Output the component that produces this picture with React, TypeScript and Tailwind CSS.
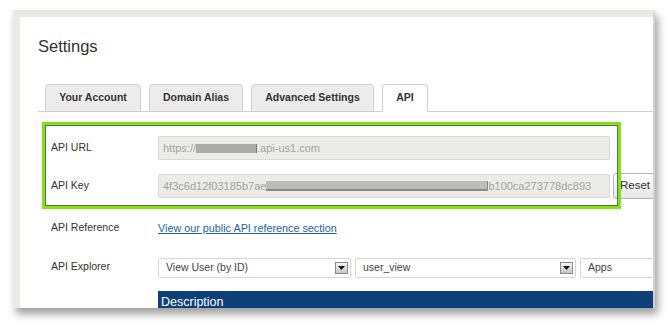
import React from "react";

const tabs = ["Your Account", "Domain Alias", "Advanced Settings", "API"];
const tabWidths = ["w-[96px]", "w-[94px]", "w-[123px]", "w-[46px]"];

function Arrow() {
  return (
    <span className="flex h-[12px] w-[13px] shrink-0 items-center justify-center border border-[#8a8a8a] bg-gradient-to-b from-[#f6f6f6] to-[#c4c4c4]">
      <svg width="7" height="4" viewBox="0 0 7 4">
        <path d="M0 0h7L3.5 4z" fill="#111" />
      </svg>
    </span>
  );
}

function Select({ value, width, arrow = true }: { value: string; width: string; arrow?: boolean }) {
  return (
    <div className={`flex h-[20px] shrink-0 items-center justify-between rounded-[2px] border border-[#d6d6d6] bg-white pl-[7px] pr-[2px] text-[10.5px] text-[#444] ${width}`}>
      <span>{value}</span>
      {arrow && <Arrow />}
    </div>
  );
}

export default function App() {
  return (
    <div className="min-h-screen bg-white pl-[13px] pt-[10px] font-['Liberation_Sans',Arial,sans-serif] text-[#333]">
      <div className="h-[298px] w-[642px] overflow-hidden border-l-[7px] border-r-2 border-t-[7px] border-[#e9e9e5] border-r-[#d2d2ce] bg-white shadow-[3px_6px_8px_rgba(0,0,0,0.38)]">
        <div className="relative">
          <h1 className="pl-[18px] pt-[19px] text-[16.5px] leading-[20px] text-[#333]">Settings</h1>

          {/* tabs */}
          <div className="ml-[18px] mt-[28px] flex items-end gap-[8px] border-b border-[#cfcfcf] pl-[7px]">
            {tabs.map((t, i) => {
              const active = t === "API";
              return (
                <div
                  key={t}
                  className={`-mb-px flex h-[28px] items-center justify-center rounded-t-[4px] border text-[10.5px] font-bold text-[#333] ${tabWidths[i]} ${
                    active ? "border-[#cfcfcf] border-b-white bg-white" : "border-[#cfcfcf] bg-[#ececec]"
                  }`}
                >
                  {t}
                </div>
              );
            })}
          </div>

          {/* form */}
          <div className="pl-[31px]">
            <div className="mt-[24px] flex h-[24px] items-center">
              <span className="w-[107px] shrink-0 text-[10.5px]">API URL</span>
              <div className="flex h-[24px] w-[452px] shrink-0 items-center overflow-hidden rounded-[2px] border border-[#d8d8d4] bg-[#ebebe8] pl-[4px] text-[11px] text-[#a3a3a3]">
                <span>https://</span>
                <span className="h-[9px] w-[61px] shrink-0 border-r border-[#777] bg-[#ababab]" />
                <span>.api-us1.com</span>
              </div>
            </div>

            <div className="mt-[14px] flex h-[24px] items-center">
              <span className="w-[107px] shrink-0 text-[10.5px]">API Key</span>
              <div className="flex h-[24px] w-[452px] shrink-0 items-center overflow-hidden whitespace-nowrap rounded-[2px] border border-[#d8d8d4] bg-[#ebebe8] pl-[4px] text-[11px] text-[#a3a3a3]">
                <span>4f3c6d12f03185b7ae</span>
                <span className="h-[10px] w-[222px] shrink-0 border-b-2 border-r border-[#8a8a8a] bg-[#bcbcbc]" />
                <span>b100ca273778dc893</span>
              </div>
              <div className="ml-[3px] flex h-[26px] w-[60px] shrink-0 items-center rounded-[3px] border border-[#b5b5b5] bg-gradient-to-b from-white to-[#e6e6e6] pl-[6px] text-[11.5px] text-[#333]">
                Reset
              </div>
            </div>

            <div className="mt-[22px] flex h-[16px] items-center">
              <span className="w-[107px] shrink-0 text-[10.5px]">API Reference</span>
              <a href="#" className="text-[10.8px] text-[#1d5ea8] underline">
                View our public API reference section
              </a>
            </div>

            <div className="mt-[22px] flex items-start">
              <span className="w-[107px] shrink-0 text-[10.5px] leading-[16px]">API Explorer</span>
              <div className="flex gap-[4px]">
                <Select value="View User (by ID)" width="w-[193px]" />
                <Select value="user_view" width="w-[221px]" />
                <Select value="Apps" width="w-[120px]" arrow={false} />
              </div>
            </div>

            <div className="ml-[107px] mt-[13px] h-[24px] bg-[#0f3f78] pl-[3px] pt-[3px] text-[12.5px] leading-[16px] text-white">
              Description
            </div>
          </div>

          {/* annotation overlay */}
          <div className="pointer-events-none absolute left-[22px] top-[105px] h-[87px] w-[579px] border-[3px] border-[#7fe315] shadow-[inset_0_0_0_1px_rgba(70,85,50,0.85)]" />
        </div>
      </div>
    </div>
  );
}
